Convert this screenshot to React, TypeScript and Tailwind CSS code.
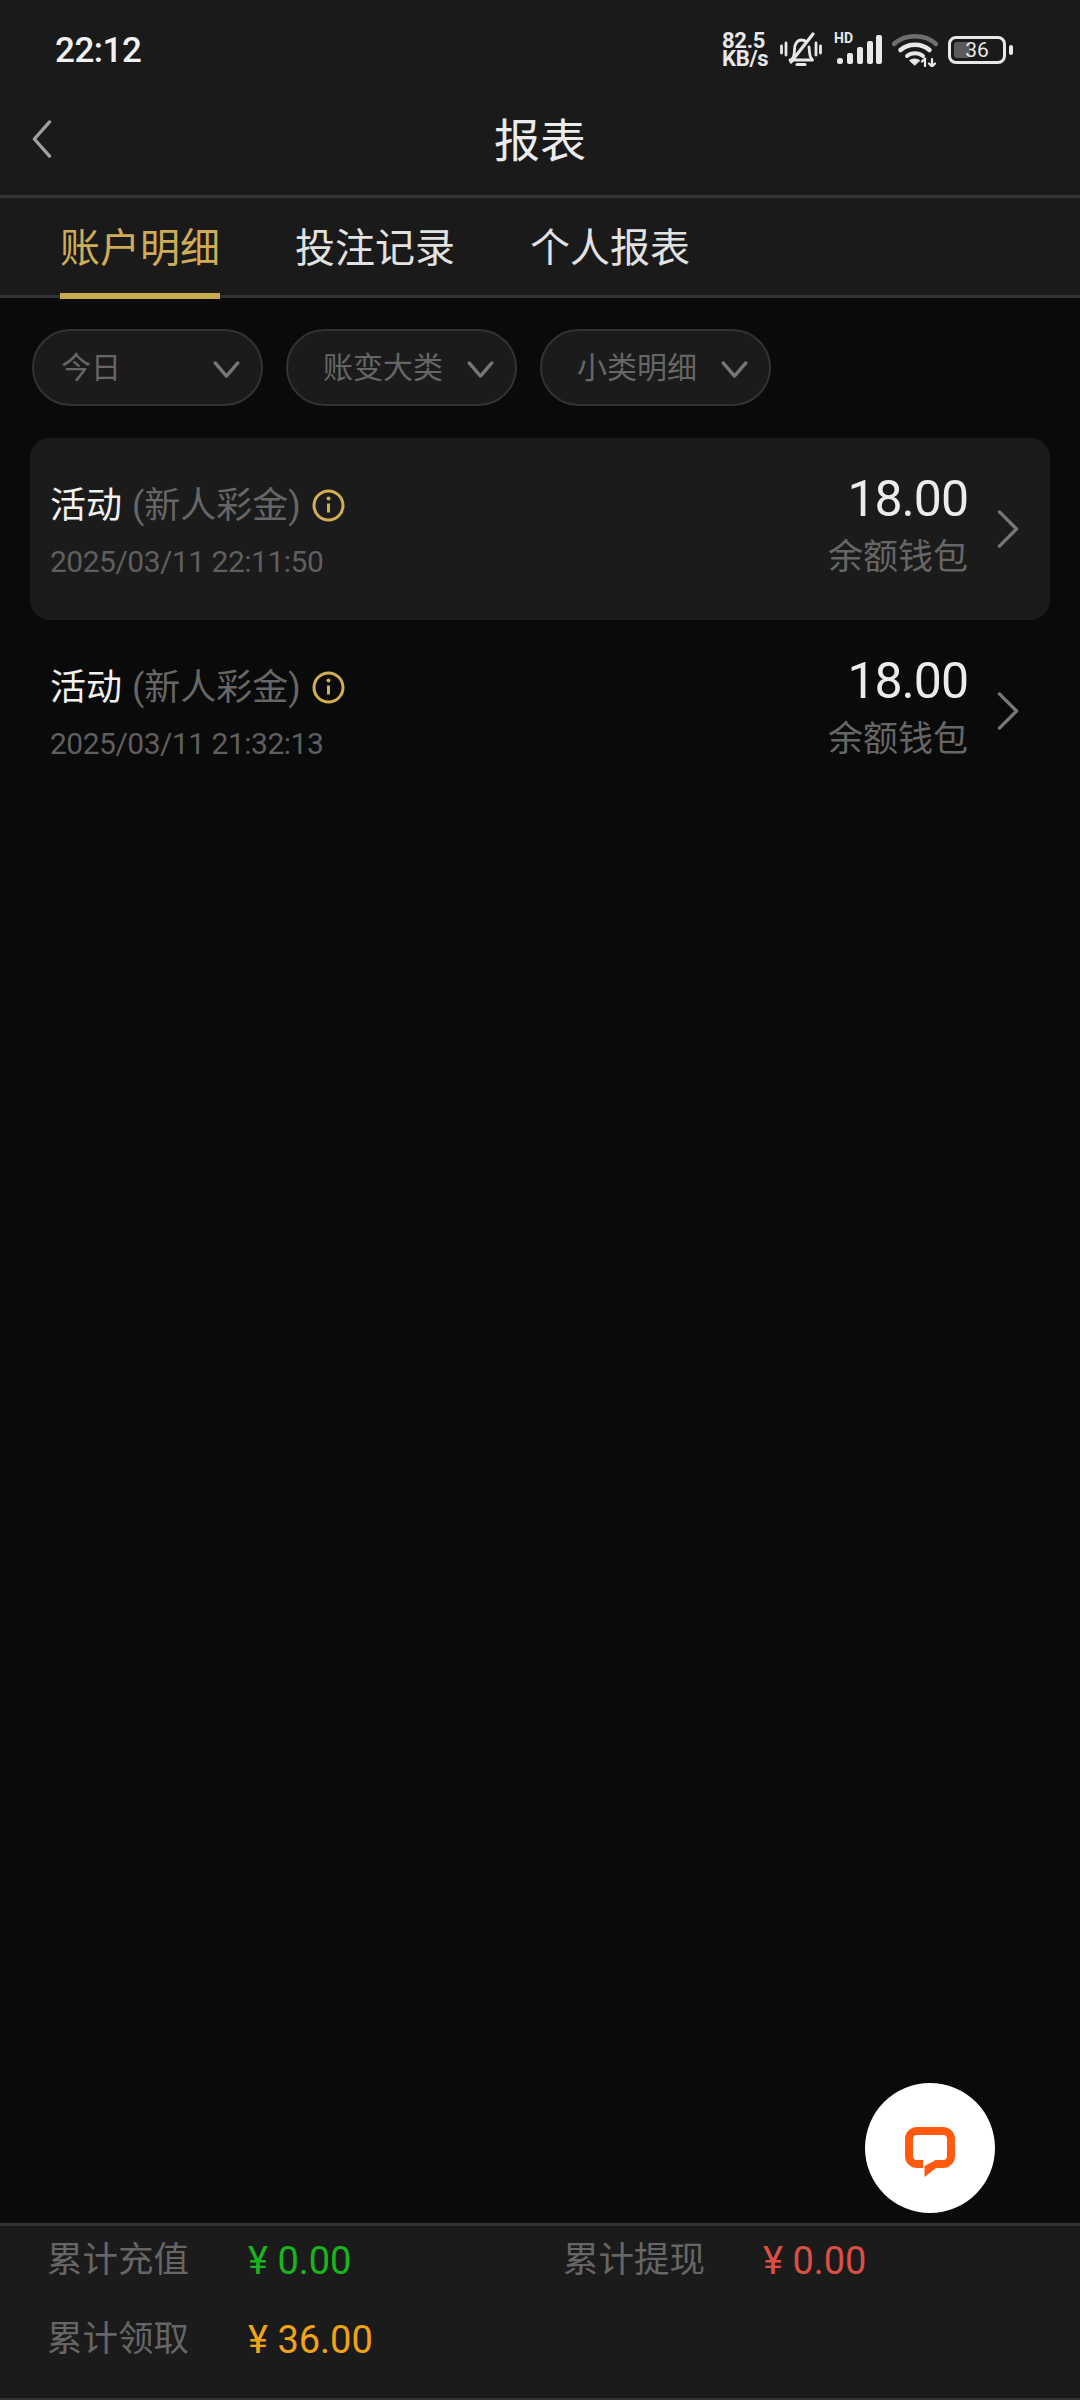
const sans = "font-['Roboto','Noto_Sans_CJK_SC',sans-serif]";

function BellOff() {
  return (
    <svg width="42" height="36" viewBox="0 0 42 36" fill="none" stroke="#e8e8e8" strokeWidth="2.800" strokeLinecap="round" strokeLinejoin="round">
      <path d="M1.500 14v7M6 11v12M36 11v12M40.500 14v7" />
      <path d="M12 27c2-2 2.500-5 2.500-10 0-5 3-9 7-9 2 0 3.500.6 5 2M29 15c.4 4 .6 8 1.500 10l2 3H10" />
      <path d="M17 32.500h8" strokeWidth="3" />
      <path d="M11 30 L33 2" strokeWidth="3.200" />
    </svg>
  );
}

function Signal() {
  return (
    <svg width="46" height="30" viewBox="0 0 46 30" fill="#e8e8e8">
      <rect x="1" y="23" width="6" height="6" rx="2.500" />
      <rect x="11" y="18" width="6" height="11" rx="2" />
      <rect x="21" y="12" width="6" height="17" rx="2" />
      <rect x="31" y="6" width="6" height="23" rx="2" />
      <rect x="40" y="0" width="6" height="29" rx="2" />
    </svg>
  );
}

function Wifi() {
  return (
    <svg width="46" height="34" viewBox="0 0 46 34" fill="none" strokeLinecap="round">
      <path d="M2 11C13 .5 33 .5 44 11" stroke="#6e6e6e" strokeWidth="4.500" />
      <path d="M8.500 17c8-7 21-7 29 0" stroke="#e8e8e8" strokeWidth="4.500" />
      <path d="M15 23c4.500-3.600 11.500-3.600 16 0" stroke="#e8e8e8" strokeWidth="4" />
      <path d="M22.500 32l-5-4.500c3-2 7-2 10 0z" fill="#e8e8e8" stroke="#e8e8e8" strokeWidth="1" />
      <path d="M33 33v-7M30 28.500l3-3M40 26v7M37 30.500l3 3 3-3" stroke="#e8e8e8" strokeWidth="2.200" />
    </svg>
  );
}

function Chevron({ dir, className }: { dir: "left" | "right" | "down"; className: string }) {
  const d = dir === "left" ? "M20 2 L4 20 L20 38" : dir === "right" ? "M2 2 L20 20 L2 38" : "M2 2 L14 16 L26 2";
  const box = dir === "down" ? "0 0 28 18" : "0 0 22 40";
  return (
    <svg viewBox={box} className={className} fill="none" stroke="currentColor" strokeWidth="3.500" strokeLinecap="round" strokeLinejoin="round">
      <path d={d} />
    </svg>
  );
}

function InfoBadge() {
  return (
    <svg width="33" height="33" viewBox="0 0 33 33" fill="none" stroke="#d2ae55" className="ml-[11px]">
      <circle cx="16.500" cy="16.500" r="14.500" strokeWidth="3" />
      <path d="M16.500 14.500v9" strokeWidth="3" />
      <circle cx="16.500" cy="9.500" r="2" fill="#d2ae55" stroke="none" />
    </svg>
  );
}

function ChatLogo() {
  return (
    <svg width="50" height="50" viewBox="0 0 50 50" fill="none">
      <path d="M18 37H12a8 8 0 0 1-8-8V12a8 8 0 0 1 8-8h26a8 8 0 0 1 8 8v17a8 8 0 0 1-8 8H30" stroke="#ff5a10" strokeWidth="8" />
      <path d="M19.500 50V39L31 33v8z" fill="#ff5a10" />
    </svg>
  );
}

const filters = [
  { label: "今日", inset: "pl-[27px]" },
  { label: "账变大类", inset: "pl-[35px]" },
  { label: "小类明细", inset: "pl-[35px]" },
];

const rows = [
  { time: "2025/03/11 22:11:50", active: true },
  { time: "2025/03/11 21:32:13", active: false },
];

export default function App() {
  return (
    <div className={`relative flex h-[2400px] w-[1080px] flex-col bg-[#0a0a0a] ${sans}`}>
      <header className="bg-[#1a1a1a]">
        <div className="flex h-[87px] items-center justify-between pl-[55px] pr-[74px] pt-[13px]">
          <span className="text-[35px] font-medium leading-none tracking-[-0.5px] text-[#f2f2f2]">22:12</span>
          <div className="flex items-center">
            <div className="w-[50px] text-[22px] font-bold leading-[18px] tracking-[-0.3px] text-[#e8e8e8]">
              82.5
              <br />
              KB/s
            </div>
            <div className="ml-[8px]"><BellOff /></div>
            <div className="relative ml-[14px]">
              <span className="absolute left-[-2px] top-[-4px] text-[14px] font-bold leading-none text-[#e8e8e8]">HD</span>
              <Signal />
            </div>
            <div className="ml-[10px]"><Wifi /></div>
            <div className="relative ml-[10px] flex h-[28px] w-[58px] items-center justify-center rounded-[8px] border-[3px] border-[#e8e8e8]">
              <span className="absolute bottom-[3px] left-[3px] top-[3px] w-[16px] rounded-[3px] bg-[#5a5a5a]" />
              <span className="relative text-[21px] leading-none text-[#e8e8e8]">36</span>
              <span className="absolute right-[-10px] top-[6px] h-[10px] w-[4px] rounded-[2px] bg-[#e8e8e8]" />
            </div>
          </div>
        </div>

        <div className="relative flex h-[111px] items-center justify-center border-b-[3px] border-[#333333]">
          <Chevron dir="left" className="absolute left-[30px] top-[33px] h-[38px] w-[22px] text-[#a0a0a0]" />
          <h1 className="text-[46px] leading-none text-[#ececec]">报表</h1>
        </div>

        <nav className="flex h-[100px] items-center gap-[75px] border-b-[3px] border-[#333333] pl-[60px] pt-[4px]">
          <div className="relative">
            <span className="block text-[40px] leading-none text-[#cfac57]">账户明细</span>
            <span className="absolute bottom-[-30px] left-0 right-0 h-[6px] bg-[#c9a850]" />
          </div>
          <span className="text-[40px] leading-none text-[#e2e2e2]">投注记录</span>
          <span className="text-[40px] leading-none text-[#e2e2e2]">个人报表</span>
        </nav>
      </header>

      <div className="flex gap-[23px] pl-[32px] pt-[31px]">
        {filters.map((f) => (
          <div
            key={f.label}
            className={`relative flex h-[77px] w-[231px] items-center rounded-[39px] border-2 border-[#333333] bg-[#1b1b1b] ${f.inset}`}
          >
            <span className="text-[30px] leading-none text-[#666666]">{f.label}</span>
            <Chevron dir="down" className="absolute right-[21px] top-[30px] h-[17px] w-[27px] text-[#777777]" />
          </div>
        ))}
      </div>

      <ul className="mt-[32px] flex flex-col px-[30px]">
        {rows.map((row) => (
          <li
            key={row.time}
            className={`flex h-[182px] items-center rounded-[20px] pl-[20px] pr-[31px] ${row.active ? "bg-[#1b1b1b]" : ""}`}
          >
            <div className="flex-1 pt-[6px]">
              <div className="flex items-center">
                <span className="text-[36px] leading-none text-[#f2f2f2]">活动</span>
                <span className="ml-[10px] text-[36px] leading-none text-[#666666]">(新人彩金)</span>
                <InfoBadge />
              </div>
              <div className="mt-[23px] text-[30px] leading-none tracking-[-0.5px] text-[#5f5f5f]">{row.time}</div>
            </div>
            <div className="flex flex-col items-end pb-[10px]">
              <span className="text-[50px] leading-none tracking-[-1px] text-[#ececec]">18.00</span>
              <span className="mt-[16px] text-[35px] leading-none text-[#666666]">余额钱包</span>
            </div>
            <Chevron dir="right" className="ml-[29px] h-[38px] w-[22px] text-[#777777]" />
          </li>
        ))}
      </ul>

      <div className="absolute left-[865px] top-[2083px] flex h-[130px] w-[130px] items-center justify-center rounded-full bg-white pt-[8px]">
        <ChatLogo />
      </div>

      <footer className="mt-auto grid h-[177px] grid-cols-[516px_1fr] grid-rows-[70px_88px] border-y-[3px] border-b-2 border-[#333333] bg-[#1b1b1b] pl-[47px]">
        <div className="flex items-center">
          <span className="w-[201px] text-[35.5px] text-[#666666]">累计充值</span>
          <span className="text-[38px] text-[#19b51f]">¥ 0.00</span>
        </div>
        <div className="flex items-center">
          <span className="w-[200px] text-[35.5px] text-[#666666]">累计提现</span>
          <span className="text-[38px] text-[#dc4f45]">¥ 0.00</span>
        </div>
        <div className="flex items-center">
          <span className="w-[201px] text-[35.5px] text-[#666666]">累计领取</span>
          <span className="text-[38px] text-[#f0a316]">¥ 36.00</span>
        </div>
      </footer>
    </div>
  );
}
